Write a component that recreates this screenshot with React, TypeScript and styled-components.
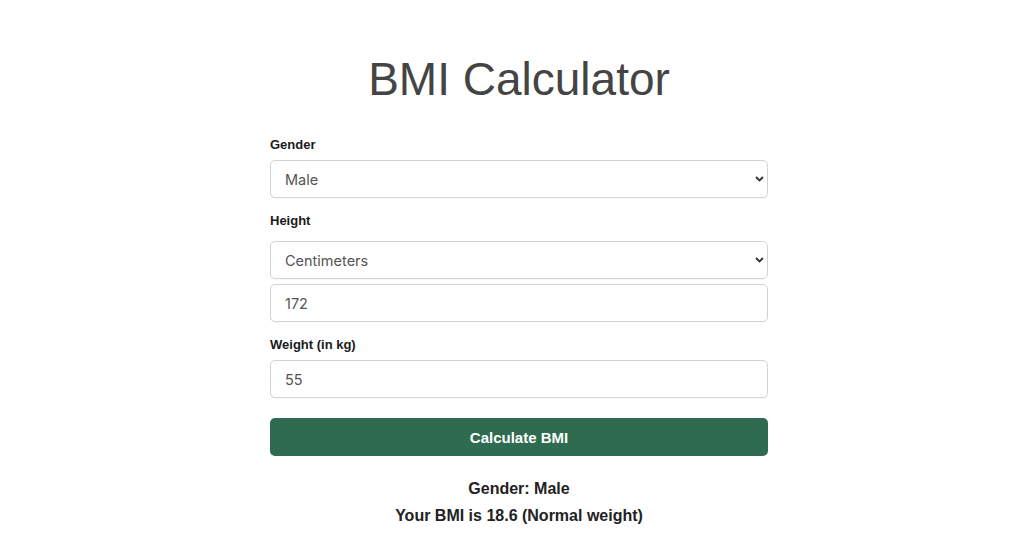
import React from "react";
import styled, { createGlobalStyle } from "styled-components";

const Global = createGlobalStyle`
  html, body { margin: 0; padding: 0; background: #ffffff; }
  body { font-family: "Liberation Sans", Arial, sans-serif; }
  * { box-sizing: border-box; }
`;

const Page = styled.main`
  display: flex;
  justify-content: center;
  padding: 52px 0 0 14px;
`;

const Card = styled.div`
  width: 498px;
  display: flex;
  flex-direction: column;
`;

const Title = styled.h1`
  margin: 0 0 30px;
  font-family: "Liberation Sans", Arial, sans-serif;
  font-weight: 400;
  font-size: 46px;
  line-height: 55px;
  color: #444444;
  text-align: center;
`;

const Group = styled.div<{ $gap?: number }>`
  display: flex;
  flex-direction: column;
  gap: 5px;
  margin-bottom: ${(p) => p.$gap ?? 15}px;
`;

const Label = styled.label<{ $space?: number }>`
  font-family: "Liberation Sans", Arial, sans-serif;
  font-weight: 700;
  font-size: 13px;
  line-height: 15px;
  color: #1a1a1a;
  margin-bottom: ${(p) => p.$space ?? 3}px;
`;

const fieldCss = `
  width: 100%;
  height: 38px;
  border: 1px solid #d3d3d3;
  border-radius: 5px;
  background: #ffffff;
  padding: 0 14px;
  font-family: Inter, "Liberation Sans", Arial, sans-serif;
  font-size: 14.5px;
  color: #555555;
  outline: none;
  box-shadow: 0 1px 1px rgba(0, 0, 0, 0.03);
`;

const SelectWrap = styled.div`
  position: relative;
  width: 100%;
`;

const Select = styled.select`
  ${fieldCss}
  appearance: none;
  -webkit-appearance: none;
`;

const Chevron = styled.svg`
  position: absolute;
  right: 4px;
  top: 50%;
  width: 9px;
  height: 6px;
  transform: translateY(-50%);
  pointer-events: none;
`;

const Input = styled.input`
  ${fieldCss}
`;

const Button = styled.button`
  width: 100%;
  height: 38px;
  border: none;
  border-radius: 5px;
  background: #2e6b50;
  color: #ffffff;
  font-family: "Liberation Sans", Arial, sans-serif;
  font-weight: 700;
  font-size: 15px;
  cursor: pointer;
`;

const Results = styled.div`
  margin-top: 19px;
  text-align: center;
`;

const ResultLine = styled.p`
  margin: 0;
  font-family: "Liberation Sans", Arial, sans-serif;
  font-weight: 700;
  font-size: 16px;
  line-height: 27px;
  color: #222222;
`;

const ArrowIcon = () => (
  <Chevron viewBox="0 0 9 6">
    <path d="M1 1 L4.5 4.5 L8 1" fill="none" stroke="#333" strokeWidth="1.8" />
  </Chevron>
);

export default function App() {
  return (
    <>
      <Global />
      <Page>
        <Card>
          <Title>BMI Calculator</Title>
          <Group>
            <Label $space={3}>Gender</Label>
            <SelectWrap>
              <Select defaultValue="male">
                <option value="male">Male</option>
                <option value="female">Female</option>
              </Select>
              <ArrowIcon />
            </SelectWrap>
          </Group>
          <Group>
            <Label $space={8}>Height</Label>
            <SelectWrap>
              <Select defaultValue="cm">
                <option value="cm">Centimeters</option>
                <option value="ft">Feet and inches</option>
              </Select>
              <ArrowIcon />
            </SelectWrap>
            <Input defaultValue="172" />
          </Group>
          <Group $gap={20}>
            <Label $space={3}>Weight (in kg)</Label>
            <Input defaultValue="55" />
          </Group>
          <Button>Calculate BMI</Button>
          <Results>
            <ResultLine>Gender: Male</ResultLine>
            <ResultLine>Your BMI is 18.6 (Normal weight)</ResultLine>
          </Results>
        </Card>
      </Page>
    </>
  );
}
